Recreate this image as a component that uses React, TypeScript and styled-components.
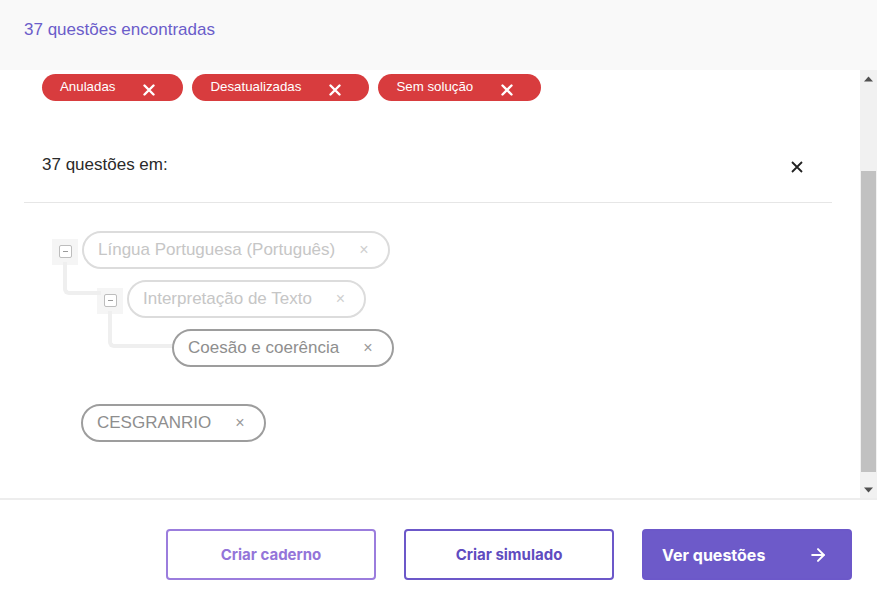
import React from "react";
import styled, { createGlobalStyle } from "styled-components";
import { ArrowRight } from "lucide-react";

const Global = createGlobalStyle`
  html, body { margin: 0; padding: 0; background: #fff; }
  body { font-family: "Liberation Sans", Arial, sans-serif; }
  * { box-sizing: border-box; }
`;

const Page = styled.div`
  width: 877px;
  height: 600px;
  display: flex;
  flex-direction: column;
  background: #fff;
  overflow: hidden;
`;

const Header = styled.header`
  height: 70px;
  flex: none;
  background: #f9f9f9;
  padding: 20px 24px 0;
`;

const HeaderTitle = styled.div`
  font-size: 17px;
  line-height: 20px;
  color: #6b5dca;
`;

const Body = styled.div`
  height: 428px;
  flex: none;
  display: flex;
`;

const Content = styled.div`
  flex: 1;
  min-width: 0;
  padding: 4px 28px 0 24px;
`;

const ChipRow = styled.div`
  display: flex;
  gap: 9px;
  padding-left: 18px;
`;

const Chip = styled.div`
  height: 27px;
  border-radius: 14px;
  background: #d83c3e;
  color: #fff;
  display: flex;
  align-items: center;
  padding: 0 28px 0 18px;
  gap: 28px;
  font-size: 13.3px;
`;

const ChipLabel = styled.span`
  margin-top: -3px;
`;

const ChipX = styled.svg`
  width: 12px;
  height: 12px;
  margin-top: 4px;
`;

const TitleRow = styled.div`
  margin-top: 54px;
  display: flex;
  align-items: center;
  justify-content: space-between;
  padding: 0 29px 27px 18px;
  border-bottom: 1px solid #e6e6e6;
`;

const Title = styled.div`
  font-size: 17px;
  line-height: 20px;
  color: #2a2a2a;
`;

const CloseIcon = styled.svg`
  width: 12px;
  height: 12px;
  margin-top: 4px;
`;

const Tree = styled.div`
  padding: 28px 0 0 28px;
`;

const Node = styled.div``;

const Row = styled.div`
  display: flex;
  align-items: center;
  gap: 4px;
`;

const Toggle = styled.div<{ $hidden?: boolean }>`
  width: 26px;
  height: 26px;
  flex: none;
  background: ${(p) => (p.$hidden ? "transparent" : "#f5f5f5")};
  display: flex;
  align-items: center;
  justify-content: center;
  margin-top: 3px;
`;

const ToggleInner = styled.div`
  width: 13px;
  height: 13px;
  border: 1px solid #bdbdbd;
  border-radius: 2px;
  background: #fff;
  display: flex;
  align-items: center;
  justify-content: center;
  &::after {
    content: "";
    width: 5px;
    height: 1.5px;
    background: #9a9a9a;
  }
`;

const Pill = styled.div<{ $active?: boolean }>`
  height: 38px;
  border-radius: 19px;
  border: 2px solid ${(p) => (p.$active ? "#9d9d9d" : "#dcdcdc")};
  color: ${(p) => (p.$active ? "#8e8e8e" : "#c6c6c6")};
  display: inline-flex;
  align-items: center;
  padding: 0 19px 0 14px;
  gap: 24px;
  font-size: 17px;
  background: #fff;
  position: relative;
  z-index: 1;
`;

const PillX = styled.span<{ $active?: boolean }>`
  font-size: 16px;
  color: ${(p) => (p.$active ? "#9a9a9a" : "#cfcfcf")};
`;

const Children = styled.div<{ $leaf?: boolean }>`
  position: relative;
  margin-top: 11px;
  padding-left: 45px;
  &::before {
    content: "";
    position: absolute;
    left: 11px;
    top: -18px;
    width: ${(p) => (p.$leaf ? "70px" : "34px")};
    height: ${(p) => (p.$leaf ? "33px" : "29px")};
    border-left: 4px solid #efefef;
    border-bottom: 4px solid #efefef;
    border-bottom-left-radius: 6px;
  }
`;

const Standalone = styled.div`
  margin-top: 37px;
  margin-left: 29px;
`;

const Scrollbar = styled.div`
  width: 17px;
  flex: none;
  background: #f1f1f1;
  display: flex;
  flex-direction: column;
`;

const ScrollArrow = styled.div`
  height: 17px;
  flex: none;
  display: flex;
  align-items: center;
  justify-content: center;
`;

const Track = styled.div`
  flex: 1;
  padding: 84px 1px 9px;
  display: flex;
`;

const Thumb = styled.div`
  flex: 1;
  background: #c1c1c1;
`;

const Footer = styled.footer`
  flex: 1;
  border-top: 2px solid #ededed;
  display: flex;
  justify-content: flex-end;
  align-items: flex-start;
  gap: 28px;
  padding: 29px 25px 0 0;
`;

const Button = styled.button<{ $variant: "light" | "outline" | "solid" }>`
  width: 210px;
  height: 51px;
  flex: none;
  border-radius: 4px;
  font-family: Inter, "Liberation Sans", sans-serif;
  font-weight: 700;
  cursor: pointer;
  display: flex;
  align-items: center;
  border: 2px solid
    ${(p) => (p.$variant === "light" ? "#9b7ddd" : "#6c58c9")};
  background: ${(p) => (p.$variant === "solid" ? "#6d5ac9" : "#fff")};
  color: ${(p) =>
    p.$variant === "light" ? "#9475d9" : p.$variant === "outline" ? "#5f4cc0" : "#fff"};
  justify-content: ${(p) => (p.$variant === "solid" ? "space-between" : "center")};
  padding: ${(p) => (p.$variant === "solid" ? "0 22px 0 18px" : "0")};
  font-size: ${(p) => (p.$variant === "solid" ? "16px" : "15px")};
`;

const WhiteX = () => (
  <ChipX viewBox="0 0 12 12">
    <path d="M1.5 1.5 L10.5 10.5 M10.5 1.5 L1.5 10.5" stroke="#fff" strokeWidth="2.4" strokeLinecap="round" />
  </ChipX>
);

const TagPill = ({ label, active }: { label: string; active?: boolean }) => (
  <Pill $active={active}>
    <span>{label}</span>
    <PillX $active={active}>×</PillX>
  </Pill>
);

export default function App() {
  return (
    <Page>
      <Global />
      <Header>
        <HeaderTitle>37 questões encontradas</HeaderTitle>
      </Header>
      <Body>
        <Content>
          <ChipRow>
            {["Anuladas", "Desatualizadas", "Sem solução"].map((c) => (
              <Chip key={c}>
                <ChipLabel>{c}</ChipLabel>
                <WhiteX />
              </Chip>
            ))}
          </ChipRow>
          <TitleRow>
            <Title>37 questões em:</Title>
            <CloseIcon viewBox="0 0 12 12">
              <path d="M1 1 L11 11 M11 1 L1 11" stroke="#222" strokeWidth="1.8" />
            </CloseIcon>
          </TitleRow>
          <Tree>
            <Node>
              <Row>
                <Toggle>
                  <ToggleInner />
                </Toggle>
                <TagPill label="Língua Portuguesa (Português)" />
              </Row>
              <Children>
                <Row>
                  <Toggle>
                    <ToggleInner />
                  </Toggle>
                  <TagPill label="Interpretação de Texto" />
                </Row>
                <Children $leaf>
                  <Row>
                    <Toggle $hidden />
                    <TagPill label="Coesão e coerência" active />
                  </Row>
                </Children>
              </Children>
            </Node>
            <Standalone>
              <TagPill label="CESGRANRIO" active />
            </Standalone>
          </Tree>
        </Content>
        <Scrollbar>
          <ScrollArrow>
            <svg width="9" height="6" viewBox="0 0 9 6">
              <path d="M0 5.5 L4.5 0.5 L9 5.5 Z" fill="#505050" />
            </svg>
          </ScrollArrow>
          <Track>
            <Thumb />
          </Track>
          <ScrollArrow>
            <svg width="9" height="6" viewBox="0 0 9 6">
              <path d="M0 0.5 L4.5 5.5 L9 0.5 Z" fill="#505050" />
            </svg>
          </ScrollArrow>
        </Scrollbar>
      </Body>
      <Footer>
        <Button $variant="light">Criar caderno</Button>
        <Button $variant="outline">Criar simulado</Button>
        <Button $variant="solid">
          <span>Ver questões</span>
          <ArrowRight size={20} strokeWidth={2.4} color="#fff" />
        </Button>
      </Footer>
    </Page>
  );
}
